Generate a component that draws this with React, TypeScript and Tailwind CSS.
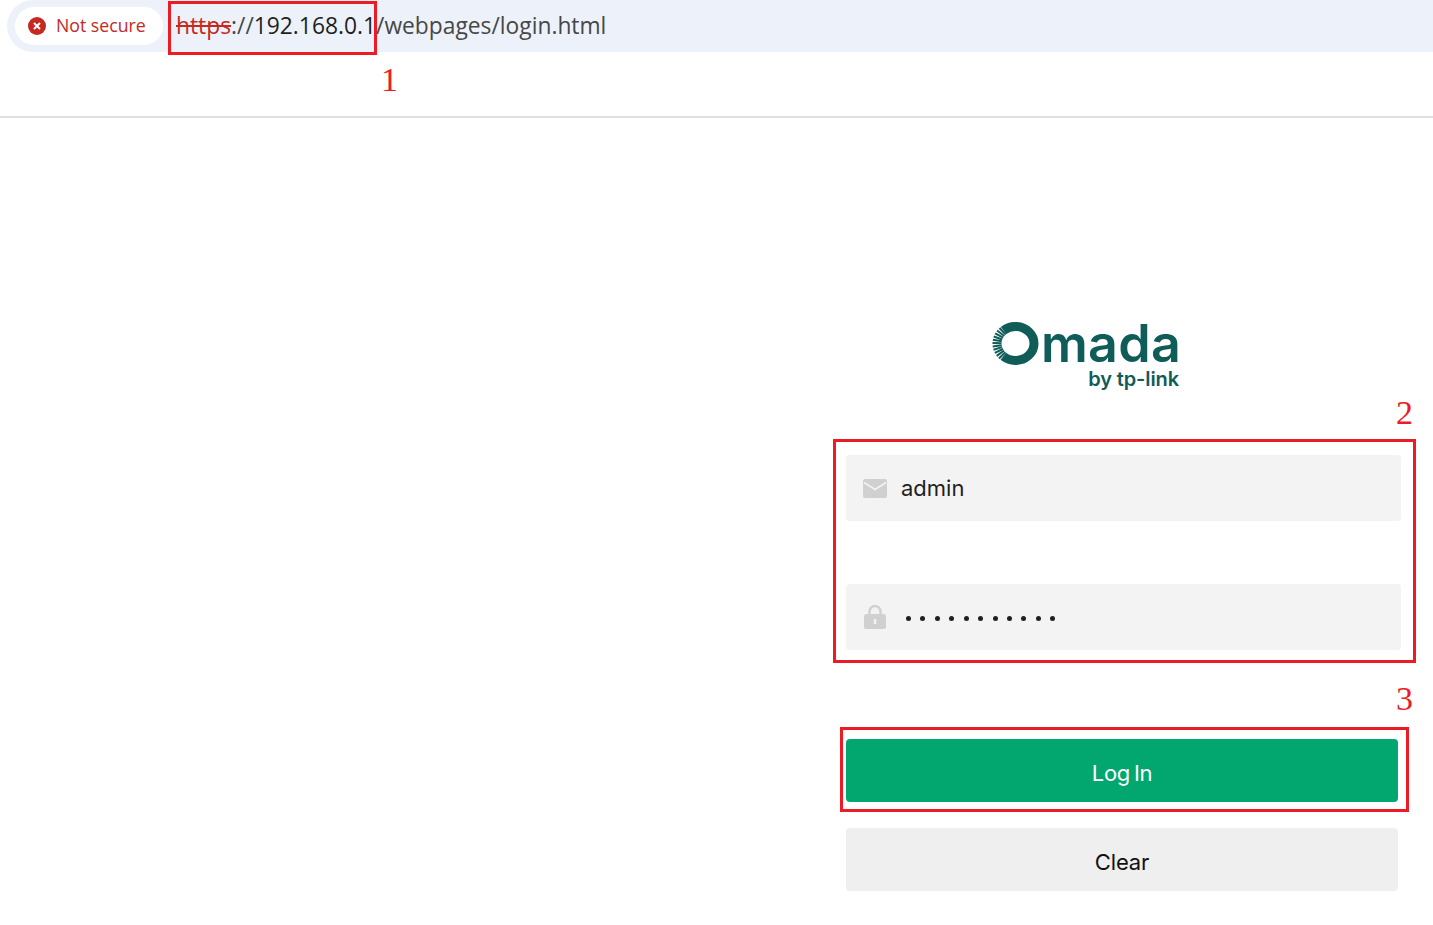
import React from 'react';

const pt = (a: number, rx: number, ry: number) => {
  const r = (a * Math.PI) / 180;
  return { x: 23.5 + rx * Math.cos(r), y: 21.5 + ry * Math.sin(r) };
};

const OmadaRing = () => {
  // ring of the logo, left side breaks into short ticks
  const ticks = Array.from({ length: 11 }, (_, i) => 136 + i * 9);
  const from = pt(-130, 18.5, 17);
  const to = pt(131, 18.5, 17);
  return (
    <svg viewBox="0 0 47 43" className="w-[47px] h-[43px] shrink-0">
      <path
        d={`M${from.x} ${from.y}A18.5 17 0 1 1 ${to.x} ${to.y}`}
        fill="none"
        stroke="#0f5c58"
        strokeWidth="9"
      />
      {ticks.map((a) => {
        const p1 = pt(a, 14, 12.5);
        const p2 = pt(a, 23, 21.5);
        return <line key={a} x1={p1.x} y1={p1.y} x2={p2.x} y2={p2.y} stroke="#0f5c58" strokeWidth="2" />;
      })}
    </svg>
  );
};

const Logo = () => (
  <div className="h-[70px] w-[188px] flex flex-col items-end font-['Inter',sans-serif] text-[#0f5c58]">
    <div className="flex items-center h-[47px] w-full">
      <OmadaRing />
      <span className="block h-[47px] text-[52px] leading-[47px] font-semibold tracking-[0.3px] ml-[2px]">mada</span>
    </div>
    <span className="block h-[23px] mt-[1px] text-[20px] leading-[23px] font-semibold tracking-[-0.1px] mr-[1px]">by tp-link</span>
  </div>
);

const AddressBar = () => (
  <div className="h-[52px] ml-[7px] pl-[8px] bg-[#edf2fa] rounded-tl-[26px] rounded-bl-[26px] flex items-center font-['Open_Sans',sans-serif]">
    <div className="h-[38px] w-[148px] bg-white rounded-full flex items-center pl-[13px] gap-[10px]">
      <span className="w-[18px] h-[18px] rounded-full bg-[#c5291f] flex items-center justify-center">
        <svg viewBox="0 0 10 10" className="w-[10px] h-[10px]">
          <path d="M2 2l6 6M8 2l-6 6" stroke="#fff" strokeWidth="2" />
        </svg>
      </span>
      <span className="text-[17.7px] leading-none text-[#c5291f] whitespace-nowrap">Not secure</span>
    </div>
    <div className="ml-[13px] text-[22.8px] leading-none whitespace-nowrap text-[#474747]">
      <span className="text-[#c5291f] line-through">https</span>
      <span>://</span>
      <span className="text-[#1f1f1f]">192.168.0.1</span>
      <span>/webpages/login.html</span>
    </div>
  </div>
);

const MailIcon = () => (
  <svg viewBox="0 0 24 19" className="w-[24px] h-[19px]">
    <rect width="24" height="19" rx="2" fill="#d0d0d0" />
    <path d="M1 3.5l11 7 11-7" fill="none" stroke="#f3f3f3" strokeWidth="1.6" />
  </svg>
);

const LockIcon = () => (
  <svg viewBox="0 0 22 24" className="w-[22px] h-[24px]">
    <path d="M5.5 10V6.5a5.5 5.5 0 0 1 11 0V10" fill="none" stroke="#d0d0d0" strokeWidth="2.4" />
    <rect y="9" width="22" height="15" rx="2.5" fill="#d0d0d0" />
    <rect x="9.8" y="14" width="2.4" height="5" fill="#f3f3f3" />
  </svg>
);

const Field = ({ icon, children }: { icon: React.ReactNode; children: React.ReactNode }) => (
  <div className="h-[66px] w-[555px] bg-[#f3f3f3] rounded-[4px] flex items-center pl-[16px]">
    <div className="w-[26px] flex justify-center">{icon}</div>
    {children}
  </div>
);

const LoginForm = () => (
  <div className="w-[555px] flex flex-col font-['Inter',sans-serif]">
    <div className="pl-[146px]">
      <Logo />
    </div>
    <div className="mt-[65px]">
      <Field icon={<MailIcon />}>
        <span className="ml-[13px] text-[22px] text-[#1f1f1f]">admin</span>
      </Field>
    </div>
    <div className="mt-[63px]">
      <Field icon={<LockIcon />}>
        <div className="ml-[18px] mt-[2px] flex gap-[9.43px]">
          {Array.from({ length: 11 }, (_, i) => (
            <span key={i} className="w-[5px] h-[5px] rounded-full bg-[#1f1f1f]" />
          ))}
        </div>
      </Field>
    </div>
    <button className="mt-[89px] h-[63px] w-[552px] pt-[5px] bg-[#02a76f] rounded-[4px] text-white text-[22px] [word-spacing:-2px] tracking-[-0.3px]">Log In</button>
    <button className="mt-[26px] h-[63px] w-[552px] pt-[5px] bg-[#efefef] rounded-[4px] text-[#111] text-[22px] tracking-[-0.1px]">Clear</button>
  </div>
);

export default function App() {
  return (
    <div className="relative h-[925px] bg-white overflow-hidden">
      <AddressBar />
      <div className="h-[66px] border-b-2 border-[#e0e0e0]" />
      <main className="flex justify-end pr-[32px] pt-[202px]">
        <LoginForm />
      </main>

      {/* red annotations on top of the screenshot */}
      <div className="absolute left-[168px] top-[1px] w-[209px] h-[54px] border-[3px] border-[#ed1c24]" />
      <div className="absolute left-[833px] top-[439px] w-[583px] h-[224px] border-[3px] border-[#ed1c24]" />
      <div className="absolute left-[840px] top-[727px] w-[569px] h-[85px] border-[3px] border-[#ed1c24]" />
      <span className="absolute left-[381px] top-[61px] text-[34px] leading-[38px] text-[#ed1c24] font-['Liberation_Serif',serif]">1</span>
      <span className="absolute left-[1396px] top-[394px] text-[34px] leading-[38px] text-[#ed1c24] font-['Liberation_Serif',serif]">2</span>
      <span className="absolute left-[1396px] top-[680px] text-[34px] leading-[38px] text-[#ed1c24] font-['Liberation_Serif',serif]">3</span>
    </div>
  );
}
